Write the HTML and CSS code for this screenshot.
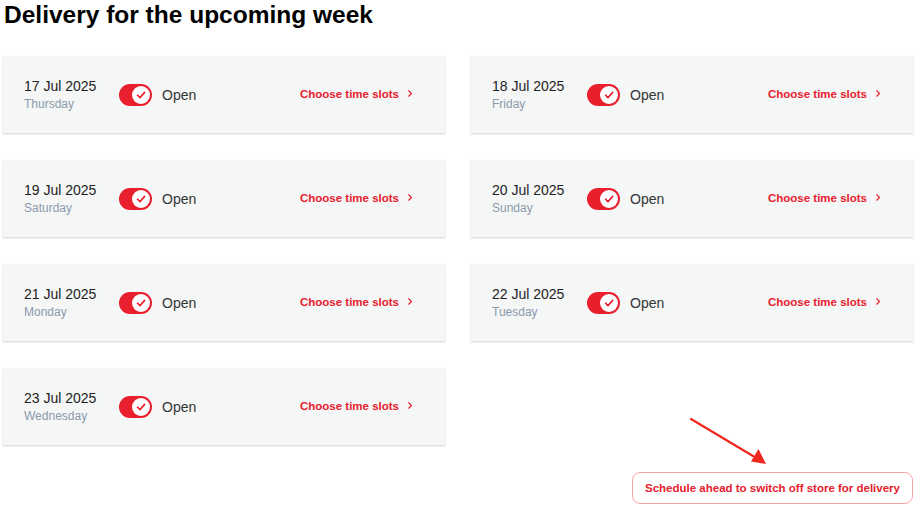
FILE: index.html
```html
<!DOCTYPE html>
<html>
<head>
<meta charset="utf-8">
<link rel="stylesheet" href="styles.css">
</head>
<body>
<div class="page">
  <h1 class="title">Delivery for the upcoming week</h1>
  <div class="grid">
    <div class="card">
      <div class="date"><div class="d">17 Jul 2025</div><div class="w">Thursday</div></div>
      <span class="toggle"><span class="knob"><svg width="12" height="12" viewBox="0 0 12 12"><path d="M2.5 6.2 L5 8.6 L9.6 3.4" fill="none" stroke="#e8202e" stroke-width="1.6" stroke-linecap="round" stroke-linejoin="round"/></svg></span></span>
      <span class="status">Open</span>
      <a class="slots">Choose time slots<svg class="chev" width="6" height="9" viewBox="0 0 6 9"><path d="M1.5 1.5 L4.5 4.5 L1.5 7.5" fill="none" stroke="#e8202e" stroke-width="1.2"/></svg></a>
    </div>
    <div class="card">
      <div class="date"><div class="d">18 Jul 2025</div><div class="w">Friday</div></div>
      <span class="toggle"><span class="knob"><svg width="12" height="12" viewBox="0 0 12 12"><path d="M2.5 6.2 L5 8.6 L9.6 3.4" fill="none" stroke="#e8202e" stroke-width="1.6" stroke-linecap="round" stroke-linejoin="round"/></svg></span></span>
      <span class="status">Open</span>
      <a class="slots">Choose time slots<svg class="chev" width="6" height="9" viewBox="0 0 6 9"><path d="M1.5 1.5 L4.5 4.5 L1.5 7.5" fill="none" stroke="#e8202e" stroke-width="1.2"/></svg></a>
    </div>
    <div class="card">
      <div class="date"><div class="d">19 Jul 2025</div><div class="w">Saturday</div></div>
      <span class="toggle"><span class="knob"><svg width="12" height="12" viewBox="0 0 12 12"><path d="M2.5 6.2 L5 8.6 L9.6 3.4" fill="none" stroke="#e8202e" stroke-width="1.6" stroke-linecap="round" stroke-linejoin="round"/></svg></span></span>
      <span class="status">Open</span>
      <a class="slots">Choose time slots<svg class="chev" width="6" height="9" viewBox="0 0 6 9"><path d="M1.5 1.5 L4.5 4.5 L1.5 7.5" fill="none" stroke="#e8202e" stroke-width="1.2"/></svg></a>
    </div>
    <div class="card">
      <div class="date"><div class="d">20 Jul 2025</div><div class="w">Sunday</div></div>
      <span class="toggle"><span class="knob"><svg width="12" height="12" viewBox="0 0 12 12"><path d="M2.5 6.2 L5 8.6 L9.6 3.4" fill="none" stroke="#e8202e" stroke-width="1.6" stroke-linecap="round" stroke-linejoin="round"/></svg></span></span>
      <span class="status">Open</span>
      <a class="slots">Choose time slots<svg class="chev" width="6" height="9" viewBox="0 0 6 9"><path d="M1.5 1.5 L4.5 4.5 L1.5 7.5" fill="none" stroke="#e8202e" stroke-width="1.2"/></svg></a>
    </div>
    <div class="card">
      <div class="date"><div class="d">21 Jul 2025</div><div class="w">Monday</div></div>
      <span class="toggle"><span class="knob"><svg width="12" height="12" viewBox="0 0 12 12"><path d="M2.5 6.2 L5 8.6 L9.6 3.4" fill="none" stroke="#e8202e" stroke-width="1.6" stroke-linecap="round" stroke-linejoin="round"/></svg></span></span>
      <span class="status">Open</span>
      <a class="slots">Choose time slots<svg class="chev" width="6" height="9" viewBox="0 0 6 9"><path d="M1.5 1.5 L4.5 4.5 L1.5 7.5" fill="none" stroke="#e8202e" stroke-width="1.2"/></svg></a>
    </div>
    <div class="card">
      <div class="date"><div class="d">22 Jul 2025</div><div class="w">Tuesday</div></div>
      <span class="toggle"><span class="knob"><svg width="12" height="12" viewBox="0 0 12 12"><path d="M2.5 6.2 L5 8.6 L9.6 3.4" fill="none" stroke="#e8202e" stroke-width="1.6" stroke-linecap="round" stroke-linejoin="round"/></svg></span></span>
      <span class="status">Open</span>
      <a class="slots">Choose time slots<svg class="chev" width="6" height="9" viewBox="0 0 6 9"><path d="M1.5 1.5 L4.5 4.5 L1.5 7.5" fill="none" stroke="#e8202e" stroke-width="1.2"/></svg></a>
    </div>
    <div class="card">
      <div class="date"><div class="d">23 Jul 2025</div><div class="w">Wednesday</div></div>
      <span class="toggle"><span class="knob"><svg width="12" height="12" viewBox="0 0 12 12"><path d="M2.5 6.2 L5 8.6 L9.6 3.4" fill="none" stroke="#e8202e" stroke-width="1.6" stroke-linecap="round" stroke-linejoin="round"/></svg></span></span>
      <span class="status">Open</span>
      <a class="slots">Choose time slots<svg class="chev" width="6" height="9" viewBox="0 0 6 9"><path d="M1.5 1.5 L4.5 4.5 L1.5 7.5" fill="none" stroke="#e8202e" stroke-width="1.2"/></svg></a>
    </div>
  </div>
  <div class="footer">
    <div class="note">Schedule ahead to switch off store for delivery</div>
  </div>
  <svg class="arrow" width="90" height="60" viewBox="0 0 90 60">
    <line x1="3" y1="3" x2="70" y2="43" stroke="#f0281e" stroke-width="2.2" stroke-linecap="round"/>
    <polygon points="78,48 63,45.5 70.5,33" fill="#f0281e"/>
  </svg>
</div>
</body>
</html>
```
FILE: styles.css
```css
html, body {
  margin: 0;
  padding: 0;
  background: #ffffff;
}
body {
  font-family: "Liberation Sans", Arial, sans-serif;
  color: #222222;
}
.page {
  position: relative;
  width: 920px;
  height: 520px;
  padding: 0 7px 0 3px;
  box-sizing: border-box;
}
.title {
  margin: 0 0 0 1px;
  padding-top: 1px;
  font-size: 24.5px;
  line-height: 28px;
  font-weight: 700;
  color: #000000;
  height: 55px;
}
.grid {
  display: grid;
  grid-template-columns: 442px 442px;
  column-gap: 26px;
  row-gap: 27px;
}
.card {
  height: 77px;
  background: #f5f6f6;
  box-shadow: 0 1px 2px rgba(0, 0, 0, 0.18);
  display: flex;
  align-items: center;
  padding: 0 32px 1px 21px;
  box-sizing: border-box;
}
.date {
  width: 95px;
  flex: none;
}
.d {
  font-size: 14px;
  line-height: 18px;
  color: #222222;
}
.w {
  font-size: 12px;
  line-height: 16px;
  color: #8a9aab;
  margin-top: 1px;
}
.toggle {
  width: 33px;
  height: 22px;
  border-radius: 11px;
  background: #e8202e;
  position: relative;
  flex: none;
  margin-top: 1px;
}
.knob {
  position: absolute;
  right: 2px;
  top: 2px;
  width: 18px;
  height: 18px;
  border-radius: 50%;
  background: #ffffff;
  display: flex;
  align-items: center;
  justify-content: center;
}
.status {
  margin-left: 10px;
  font-size: 14px;
  color: #333333;
  margin-top: 1px;
}
.slots {
  margin-left: auto;
  font-size: 11.5px;
  font-weight: 700;
  color: #e8202e;
  display: flex;
  align-items: center;
  margin-top: -1px;
}
.chev {
  margin-left: 8px;
}
.footer {
  display: flex;
  justify-content: flex-end;
  margin-top: 27px;
}
.note {
  border: 1px solid #f5a3a6;
  border-radius: 8px;
  height: 32px;
  box-sizing: border-box;
  padding: 0 10px;
  display: flex;
  align-items: center;
  font-size: 11.5px;
  font-weight: 700;
  color: #e8202e;
  width: 281px;
  justify-content: center;
  white-space: nowrap;
}
.arrow {
  position: absolute;
  left: 688px;
  top: 416px;
}
```
